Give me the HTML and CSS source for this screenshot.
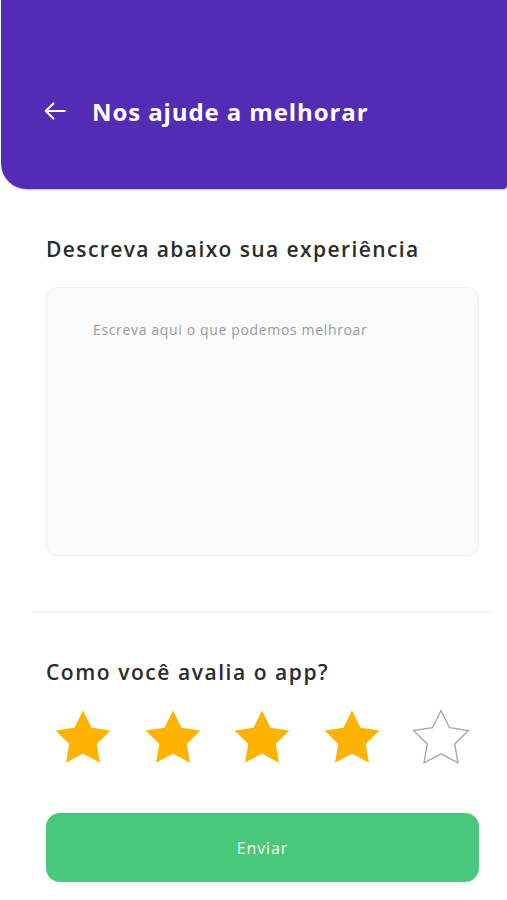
FILE: index.html
```html
<!DOCTYPE html>
<html lang="pt-BR">
<head>
<meta charset="utf-8">
<title>Nos ajude a melhorar</title>
<link rel="stylesheet" href="styles.css">
</head>
<body>
<header class="topbar">
  <div class="topbar-row">
    <svg class="back" viewBox="0 0 24 24" width="26" height="26" fill="none" stroke="#fff" stroke-width="2" stroke-linecap="round" stroke-linejoin="round"><path d="M21 12H3.5M10.5 5l-7 7 7 7"/></svg>
    <h1 class="title">Nos ajude a melhorar</h1>
  </div>
</header>
<main class="content">
  <section class="feedback">
    <h2 class="label">Descreva abaixo sua experiência</h2>
    <div class="textarea"><span class="placeholder">Escreva aqui o que podemos melhroar</span></div>
  </section>
  <hr class="divider">
  <section class="rating">
    <h2 class="label">Como você avalia o app?</h2>
    <div class="stars">
      <svg class="star" viewBox="0 0 24 24"><polygon class="on" points="12,2 15.09,8.26 22,9.27 17,14.14 18.18,21.02 12,17.77 5.82,21.02 7,14.14 2,9.27 8.91,8.26"/></svg>
      <svg class="star" viewBox="0 0 24 24"><polygon class="on" points="12,2 15.09,8.26 22,9.27 17,14.14 18.18,21.02 12,17.77 5.82,21.02 7,14.14 2,9.27 8.91,8.26"/></svg>
      <svg class="star" viewBox="0 0 24 24"><polygon class="on" points="12,2 15.09,8.26 22,9.27 17,14.14 18.18,21.02 12,17.77 5.82,21.02 7,14.14 2,9.27 8.91,8.26"/></svg>
      <svg class="star" viewBox="0 0 24 24"><polygon class="on" points="12,2 15.09,8.26 22,9.27 17,14.14 18.18,21.02 12,17.77 5.82,21.02 7,14.14 2,9.27 8.91,8.26"/></svg>
      <svg class="star" viewBox="0 0 24 24"><polygon class="off" points="12,2 15.09,8.26 22,9.27 17,14.14 18.18,21.02 12,17.77 5.82,21.02 7,14.14 2,9.27 8.91,8.26"/></svg>
    </div>
  </section>
  <button class="send" type="button">Enviar</button>
</main>
</body>
</html>
```

FILE: styles.css
```css
* { box-sizing: border-box; }
html, body { margin: 0; padding: 0; background: #fff; }
body {
  font-family: "Open Sans", "Noto Sans", sans-serif;
  color: #2a2a2a;
  width: 507px;
  height: 900px;
  overflow: hidden;
}
.topbar {
  height: 189px;
  margin-left: 1px;
  background: #542bb5;
  border-radius: 0 0 4px 26px;
  box-shadow: 0 1px 1px rgba(84, 43, 181, 0.35);
  padding-top: 90px;
}
.topbar-row {
  display: flex;
  align-items: center;
  height: 42px;
  padding-left: 41px;
  gap: 24px;
}
.back { display: block; flex: none; }
.title {
  margin: 0;
  color: #fff;
  font-size: 24px;
  font-weight: 700;
  letter-spacing: 0.9px;
}
.content { padding: 0 28px 0 46px; }
.feedback { padding-top: 46px; }
.label {
  margin: 0;
  font-size: 21px;
  font-weight: 600;
  line-height: 28px;
  color: #2b2b2b;
  letter-spacing: 1.4px;
}
.rating .label { letter-spacing: 1.55px; }
.textarea {
  margin-top: 24px;
  width: 433px;
  height: 269px;
  background: #fbfbfb;
  border: 1px solid #f1f1f1;
  border-radius: 12px;
  box-shadow: 0 1px 2px rgba(0,0,0,0.03);
  padding: 30px 0 0 46px;
}
.placeholder {
  font-size: 14px;
  color: #9a9a9a;
  font-weight: 500;
  letter-spacing: 0.65px;
}
.divider {
  margin: 55px -13px 0 -14px;
  border: 0;
  height: 2px;
  background: #f2f2f2;
}
.rating { padding-top: 45px; }
.stars {
  display: flex;
  gap: 23.5px;
  margin-top: 19px;
  margin-left: 4px;
}
.star { width: 66px; height: 66px; display: block; flex: none; }
.star .on { fill: #fdb300; }
.star .off { fill: none; stroke: #a8a8a8; stroke-width: 0.5; stroke-linejoin: miter; }
.send {
  display: block;
  margin-top: 42px;
  width: 433px;
  height: 69px;
  border: 0;
  border-radius: 14px;
  background: #48c87a;
  color: #fff;
  font-family: inherit;
  font-size: 16px;
  font-weight: 500;
  letter-spacing: 0.9px;
}
```
